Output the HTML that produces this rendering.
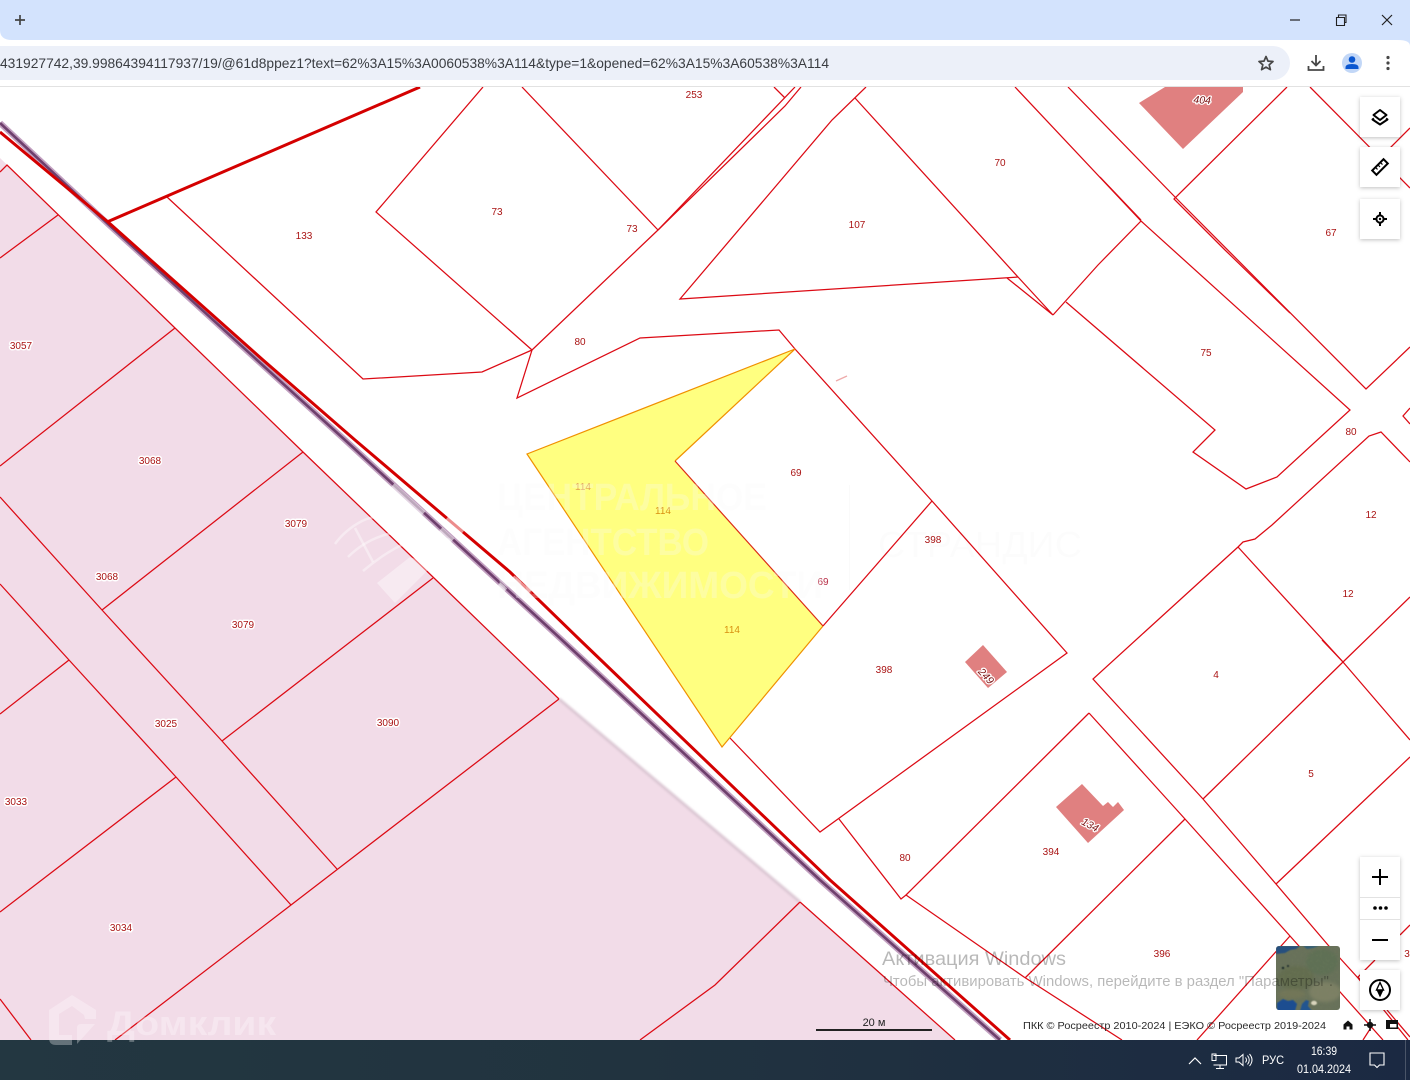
<!DOCTYPE html>
<html lang="ru"><head><meta charset="utf-8"><title>Карта</title>
<style>
html,body{margin:0;padding:0;width:1410px;height:1080px;overflow:hidden;background:#fff}
svg{display:block;position:absolute;left:0;top:0}
text{font-family:"Liberation Sans",sans-serif}
.r polyline,.r path{fill:none;stroke:#dc0a14;stroke-width:1.25;stroke-linejoin:miter}
.l text{font-size:10px;fill:#aa1414;text-anchor:middle}
.h text{font-size:10px;fill:#aa1414;text-anchor:middle;paint-order:stroke;stroke:#fff;stroke-width:3px;stroke-linejoin:round}
.b text{font-size:10.5px;font-style:italic;fill:#7a1010;text-anchor:middle;paint-order:stroke;stroke:#fff;stroke-width:2.5px;stroke-linejoin:round}
.ic{fill:none;stroke:#000;stroke-width:2}
</style></head><body>
<svg width="1410" height="1080" viewBox="0 0 1410 1080" xmlns="http://www.w3.org/2000/svg">
<defs>
<linearGradient id="tb" x1="0" x2="1" y1="0" y2="0"><stop offset="0" stop-color="#233741"/><stop offset=".45" stop-color="#21333f"/><stop offset="1" stop-color="#1b2942"/></linearGradient>
<filter id="bl" x="-20%" y="-20%" width="140%" height="140%"><feGaussianBlur stdDeviation="1.6"/></filter>
<filter id="bl3" x="-20%" y="-20%" width="140%" height="140%"><feGaussianBlur stdDeviation=".5"/></filter>
<filter id="bl2" x="-20%" y="-20%" width="140%" height="140%"><feGaussianBlur stdDeviation="1"/></filter>
<filter id="ns"><feTurbulence type="fractalNoise" baseFrequency=".35" numOctaves="3" seed="4"/><feColorMatrix values="0 0 0 0 .2  0 0 0 0 .25  0 0 0 0 .12  0 0 0 1.6 -.65"/></filter>
<filter id="sh" x="-30%" y="-30%" width="160%" height="160%"><feDropShadow dx="0" dy="1" stdDeviation="2" flood-color="#000" flood-opacity=".25"/></filter>
<clipPath id="th"><rect x="1276" y="946" width="64" height="64" rx="3"/></clipPath>
<clipPath id="map"><rect x="0" y="87" width="1410" height="953"/></clipPath>
</defs>

<g clip-path="url(#map)">
<polygon points="0,158 175,328 303,452 434,578 559,699 800,902 955,1040 0,1040" fill="#f2dce8"/>
<polyline points="559,699 800,902" fill="none" stroke="#dcc8d4" stroke-width="3" filter="url(#bl2)"/>

<polygon points="1139,103 1165,87 1243,87 1243,92 1183,149" fill="#e08080"/>
<polygon points="983,645 1007,672 988,688 965,662" fill="#e08080"/>
<polygon points="1082,784 1056,807 1088,843 1124,810 1118,802 1113,807 1108,802 1103,806" fill="#e08080"/>

<g class="r">
<polyline points="0,172 7,165 175,328 303,452 434,578 559,699"/>
<polyline points="800,902 955,1040"/>
<polyline points="0,258 58,215"/>
<polyline points="0,466 175,328"/>
<polyline points="0,497 102,610 222,741 337,869"/>
<polyline points="0,584 69,660 176,777 291,905"/>
<polyline points="0,714 69,660"/>
<polyline points="0,912 176,777"/>
<polyline points="303,452 102,610"/>
<polyline points="433,578 222,741"/>
<polyline points="559,699 291,905 115,1040"/>
<polyline points="0,999 31,1040"/>
<polyline points="800,902 715,985 640,1040"/>

<polyline points="167,197 363,379 482,372 532,350"/>
<polyline points="483,87 376,212 532,350 658,230 795,87"/>
<polyline points="658,230 785,106 801,87"/>
<polyline points="522,87 658,230"/>
<polyline points="774,87 785,98"/>
<polyline points="532,350 517,398 640,338 779,330 795,349 932,501 1067,653 820,832 730,738"/>
<polyline points="932,501 823,626"/>
<polyline points="866,87 832,120 680,299 1018,277"/>
<polyline points="855,98 1018,277 1053,315 1007,278"/>
<polyline points="1053,315 1098,265 1141,221 1015,87"/>
<polyline points="1141,221 1350,410 1277,477 1246,489 1193,452 1215,430 1066,302"/>
<polyline points="1068,87 1175,197 1366,389 1410,347"/>
<polyline points="1287,87 1174,199 1225,250 1290,313"/>
<polyline points="1100,177 1141,220"/>
<polyline points="1310,87 1410,188"/>
<polyline points="1410,128 1380,158"/>
<polyline points="1410,408 1403,416 1410,424"/>
<polyline points="1410,462 1381,432 1369,436 1272,525 1255,539 1243,542 1238,547 1093,679 1203,799 1276,884 1328,945 1358,978 1408,1040"/>
<polyline points="1238,547 1343,662 1410,740"/>
<polyline points="1410,597 1343,662 1203,799"/>
<polyline points="1322,640 1343,662"/>
<polyline points="1276,884 1410,757"/>
<polyline points="1089,713 1185,819 1290,936 1383,1040"/>
<polyline points="1089,713 906,895"/>
<polyline points="1185,819 1025,978"/>
<polyline points="1290,936 1197,1040"/>
<polyline points="839,819 901,899 906,895 1024,977 1122,1040"/>
<polyline points="1375,960 1358,977 1363,983"/>
<polyline points="1410,925 1400,935"/>
<polyline points="1387,1010 1410,1037"/>
<polyline points="1372,1026 1363,1040"/>
<polyline points="836,381 847,376" style="stroke:#eaa"/>
</g>

<polyline points="0,123 108,224 257,360 345,440 562,640 820,880 1000,1040" fill="none" stroke="#c2a0c0" stroke-width="6"/>
<polyline points="0,123 108,224 257,360 345,440 562,640 820,880 1000,1040" fill="none" stroke="#6e3f6c" stroke-width="2.6"/>
<polyline points="0,132 108,222 263,360 355,440 510,572 580,640 830,880 1010,1040" fill="none" stroke="#d40000" stroke-width="3"/>
<polyline points="107,222 420,87" fill="none" stroke="#d40000" stroke-width="3"/>

<g stroke="#fff" stroke-width="7" stroke-opacity=".55" fill="none">
<path d="M392 486 L423 514"/><path d="M440 530 L452 541"/><path d="M498 585 L505 591"/>
<path d="M447 518 L463 532" stroke-width="4"/><path d="M513 577 L530 592" stroke-width="4"/>
</g>

<polygon points="527,454 795,349 675,461 823,626 722,747" fill="#ffff80"/>
<polyline points="823,626 722,747 527,454 795,349 675,461" fill="none" stroke="#f09000" stroke-width="1.2"/>
<polyline points="675,461 823,626" fill="none" stroke="#dc2a14" stroke-width="1.2"/>

<g class="l">
<text x="694" y="98">253</text><text x="497" y="215">73</text><text x="632" y="232">73</text><text x="304" y="239">133</text>
<text x="857" y="228">107</text><text x="1000" y="166">70</text><text x="1331" y="236">67</text><text x="1206" y="356">75</text>
<text x="580" y="345">80</text><text x="1351" y="435">80</text><text x="1371" y="518">12</text><text x="1348" y="597">12</text>
<text x="1216" y="678">4</text><text x="1311" y="777">5</text><text x="796" y="476">69</text><text x="823" y="585" style="fill:#b83048">69</text>
<text x="933" y="543">398</text><text x="884" y="673">398</text><text x="905" y="861">80</text><text x="1051" y="855">394</text>
<text x="1162" y="957">396</text><text x="1407" y="957">3</text>
<text x="583" y="490" style="fill:#e0a050">114</text><text x="663" y="514" style="fill:#d89010">114</text><text x="732" y="633" style="fill:#d89010">114</text>
</g>
<g class="h">
<text x="21" y="349">3057</text><text x="150" y="464">3068</text><text x="107" y="580">3068</text><text x="296" y="527">3079</text>
<text x="243" y="628">3079</text><text x="166" y="727">3025</text><text x="388" y="726">3090</text><text x="16" y="805">3033</text><text x="121" y="931">3034</text>
</g>
<g class="b">
<text transform="translate(1202,103.500) rotate(3)">404</text>
<text transform="translate(983.500,678.500) rotate(47)">249</text>
<text transform="translate(1088.500,828) rotate(28)">134</text>
</g>

<g fill="#000" fill-opacity=".012" style="font-size:38px;font-weight:bold">
<text x="497" y="510" textLength="270" lengthAdjust="spacingAndGlyphs">ЦЕНТРАЛЬНОЕ</text>
<text x="497" y="555" textLength="212" lengthAdjust="spacingAndGlyphs">АГЕНТСТВО</text>
<text x="497" y="598" textLength="326" lengthAdjust="spacingAndGlyphs">НЕДВИЖИМОСТИ</text>
</g>
<g fill="#fff" fill-opacity=".27" style="font-size:38px;font-weight:bold">
<text x="497" y="510" textLength="270" lengthAdjust="spacingAndGlyphs">ЦЕНТРАЛЬНОЕ</text>
<text x="497" y="555" textLength="212" lengthAdjust="spacingAndGlyphs">АГЕНТСТВО</text>
<text x="497" y="598" textLength="326" lengthAdjust="spacingAndGlyphs">НЕДВИЖИМОСТИ</text>
</g>
<text x="878" y="557" style="font-size:36px" fill="#000" fill-opacity=".012" textLength="204" lengthAdjust="spacingAndGlyphs">СТРАНДИС</text>
<rect x="849" y="485" width="1" height="105" fill="#000" fill-opacity=".02"/>
<g fill="none" stroke="#fff" stroke-opacity=".4" stroke-width="2.500">
<path d="M335 544 Q345 530 362 521 Q378 513 396 520"/>
<path d="M348 557 Q365 540 388 534 Q408 528 425 535"/>
<path d="M363 571 Q385 552 410 541 Q430 534 450 540"/>
<path d="M355 528 L373 562"/>
</g>
<polygon points="377,583 410,557 433,565 395,603" fill="#fff" fill-opacity=".4"/>
</g>

<!-- scale, attribution -->
<rect x="816" y="1029" width="116" height="2" fill="#222"/>
<text x="874" y="1026" text-anchor="middle" style="font-size:11px" fill="#222">20 м</text>
<text x="1023" y="1029" style="font-size:10.500px" fill="#2a2a2a" textLength="303" lengthAdjust="spacingAndGlyphs">ПКК © Росреестр 2010-2024 | ЕЭКО © Росреестр 2019-2024</text>
<path d="M1343.500 1029.500 v-5 l4.500-4 4.500 4 v5 h-3 v-3 h-3 v3z" fill="#111"/>
<circle cx="1370" cy="1025" r="3.200" fill="#111"/><path d="M1370 1019 v12 M1364 1025 h12" stroke="#111" stroke-width="1.500"/>
<path d="M1386 1020 h12 v9 h-12z" fill="#111"/><rect x="1390" y="1024" width="6.500" height="3.500" fill="#fff"/>

<!-- thumbnail -->
<g clip-path="url(#th)">
<rect x="1276" y="946" width="64" height="64" fill="#68715a"/>
<g filter="url(#bl)">
<ellipse cx="1322" cy="962" rx="16" ry="13" fill="#5f7055"/>
<ellipse cx="1296" cy="978" rx="18" ry="12" fill="#646d50"/>
<ellipse cx="1325" cy="992" rx="16" ry="10" fill="#7d8065"/>
<ellipse cx="1292" cy="994" rx="14" ry="5" fill="#727659"/>
</g>
<rect x="1276" y="946" width="64" height="64" filter="url(#ns)" opacity=".22"/>
<g filter="url(#bl3)">
<path d="M1276 946 h24 l-4 3 -6 1 -5 3 -9 1z" fill="#26507e"/>
<path d="M1303 946 h16 l-6 2 -6 1z" fill="#335f78"/>
<path d="M1277 1011 v-8 l6-4 5 2 5 -1 4 4 -2 7z" fill="#1d4d90"/>
<path d="M1300 1011 l2-7 4-4 3 1 -1 5 4 5z" fill="#23558f"/>
<ellipse cx="1314" cy="1003" rx="3" ry="2.200" fill="#d8d4bc"/>
<circle cx="1283" cy="968" r="1.200" fill="#1d2b2b"/><circle cx="1288" cy="966" r="1" fill="#1d2b2b"/>
</g>
</g>

<!-- activation -->
<text x="882" y="965" style="font-size:19.500px" fill="#000" fill-opacity=".28" textLength="184" lengthAdjust="spacingAndGlyphs">Активация Windows</text>
<text x="883" y="986" style="font-size:14.500px" fill="#000" fill-opacity=".28" textLength="450" lengthAdjust="spacingAndGlyphs">Чтобы активировать Windows, перейдите в раздел "Параметры".</text>

<!-- map controls -->
<g filter="url(#sh)" fill="#fff">
<rect x="1360" y="97" width="40" height="40"/><rect x="1360" y="147" width="40" height="40"/><rect x="1360" y="199" width="40" height="40"/>
<rect x="1360" y="857" width="40" height="103"/><rect x="1360" y="970" width="40" height="40"/>
</g>
<rect x="1360" y="897" width="40" height="1" fill="#e2e2e2"/><rect x="1360" y="919" width="40" height="1" fill="#e2e2e2"/>
<g class="ic">
<path d="M1380 110 l6.500 5 -6.500 5 -6.500 -5z" stroke-linejoin="round"/><path d="M1374 118.500 l-1.500 1 7.500 5 7.500 -5 -1.500 -1" stroke-linejoin="round"/>
<g transform="rotate(-45 1380 167)"><rect x="1372" y="164" width="16" height="6"/><path d="M1376.500 164.500 v2.500 M1380 164.500 v2.500 M1383.500 164.500 v2.500" stroke-width="1.200"/></g>
<circle cx="1380" cy="219" r="3.600"/><path d="M1380 212 v3.500 M1380 222.500 v3.500 M1373 219 h3.500 M1383.500 219 h3.500"/>
<path d="M1372 877 h16 M1380 869 v16"/><path d="M1372 940 h16"/>
<circle cx="1380" cy="990" r="10"/>
</g>
<circle cx="1375" cy="908" r="1.800"/><circle cx="1380.500" cy="908" r="1.800"/><circle cx="1386" cy="908" r="1.800"/>
<circle cx="1380" cy="219" r="1.200"/>
<path d="M1380 982.500 l3.500 7.500 h-7z" fill="none" stroke="#000" stroke-width="1.400"/><path d="M1376.500 990 h7 l-3.500 7.500z" fill="#000"/>

<!-- chrome -->
<rect x="0" y="0" width="1410" height="87" fill="#fff"/>
<path d="M0 0 H1410 V46 Q1410 40 1398 40 H12 Q0 40 0 30z" fill="#d3e3fd"/>
<path d="M0 46 H1273 a17 17 0 0 1 0 34 H0z" fill="#ecf0f9"/>
<rect x="0" y="86" width="1410" height="1" fill="#e2e2e2"/>
<path d="M15 20 h10 M20 15 v10" stroke="#444" stroke-width="1.700" fill="none"/>
<path d="M1290 20 h10" stroke="#222" stroke-width="1.200"/>
<path d="M1336.500 17.500 h8 v8 h-8z M1338.500 17.500 v-2.500 h7.500 v7.500 h-1.700" fill="none" stroke="#222" stroke-width="1.100"/>
<path d="M1382 15 l10 10 M1392 15 l-10 10" stroke="#222" stroke-width="1.200"/>
<text x="0" y="68" style="font-size:14px" fill="#3a3d42" textLength="829" lengthAdjust="spacingAndGlyphs">431927742,39.99864394117937/19/@61d8ppez1?text=62%3A15%3A0060538%3A114&amp;type=1&amp;opened=62%3A15%3A60538%3A114</text>
<path d="M1266 56.500 l2 4.600 5 .4 -3.800 3.300 1.200 4.900 -4.400 -2.600 -4.400 2.600 1.200 -4.900 -3.800 -3.300 5 -.4z" fill="none" stroke="#474747" stroke-width="1.700" stroke-linejoin="round"/>
<path d="M1316 55 v10 M1311.500 61 l4.500 4.500 4.500 -4.500 M1308.500 66 v4 h15 v-4" fill="none" stroke="#474747" stroke-width="1.800"/>
<circle cx="1352" cy="63" r="10" fill="#c2d7f7"/>
<circle cx="1352" cy="59.500" r="3.300" fill="#0b57d0"/><path d="M1345.500 69 v-1.500 q0 -3.500 6.500 -3.500 t6.500 3.500 v1.500z" fill="#0b57d0"/>
<circle cx="1388" cy="57.500" r="1.600" fill="#474747"/><circle cx="1388" cy="63" r="1.600" fill="#474747"/><circle cx="1388" cy="68.500" r="1.600" fill="#474747"/>

<!-- taskbar -->
<rect x="0" y="1040" width="1410" height="40" fill="url(#tb)"/>
<rect x="1405" y="1040" width="1" height="40" fill="#4a5568"/>
<path d="M1189 1064 l6 -6 6 6" fill="none" stroke="#fff" stroke-width="1.200"/>
<path d="M1213.500 1055.500 h13 v9.500 h-13 M1212 1054 h4 v6.500 h-4z M1220 1065 v3.500 M1216 1068.500 h8" fill="none" stroke="#fff" stroke-width="1"/>
<path d="M1236 1058 h3 l4 -3.500 v11 l-4 -3.500 h-3z M1245.500 1057.500 q2 2.500 0 5 M1247.500 1055.500 q3.500 4.500 0 9 M1249.500 1054 q5 6 0 12" fill="none" stroke="#fff" stroke-width="1"/>
<text x="1262" y="1064" style="font-size:12px" fill="#fff" textLength="22" lengthAdjust="spacingAndGlyphs">РУС</text>
<text x="1311" y="1055" style="font-size:12px" fill="#fff" textLength="26" lengthAdjust="spacingAndGlyphs">16:39</text>
<text x="1297" y="1073" style="font-size:12px" fill="#fff" textLength="54" lengthAdjust="spacingAndGlyphs">01.04.2024</text>
<path d="M1370 1053 h14 v12 h-4.500 l-2.500 2.500 -2.500 -2.500 h-4.500z" fill="none" stroke="#fff" stroke-width="1.100"/>

<!-- domclick watermark -->
<g fill="#fff" fill-opacity=".3">
<path d="M72 995 L96 1010 V1019 H85 L84 1015 L72 1006 L59 1014 V1035 H72 V1045 H56 Q49 1045 49 1038 V1010 Z"/>
<path d="M77 1044 V1028 Q77 1024 81 1024 H95 Z"/>
<text x="107" y="1035" style="font-size:34px;font-weight:bold" textLength="169" lengthAdjust="spacingAndGlyphs">Домклик</text>
</g>
</svg>
</body></html>
